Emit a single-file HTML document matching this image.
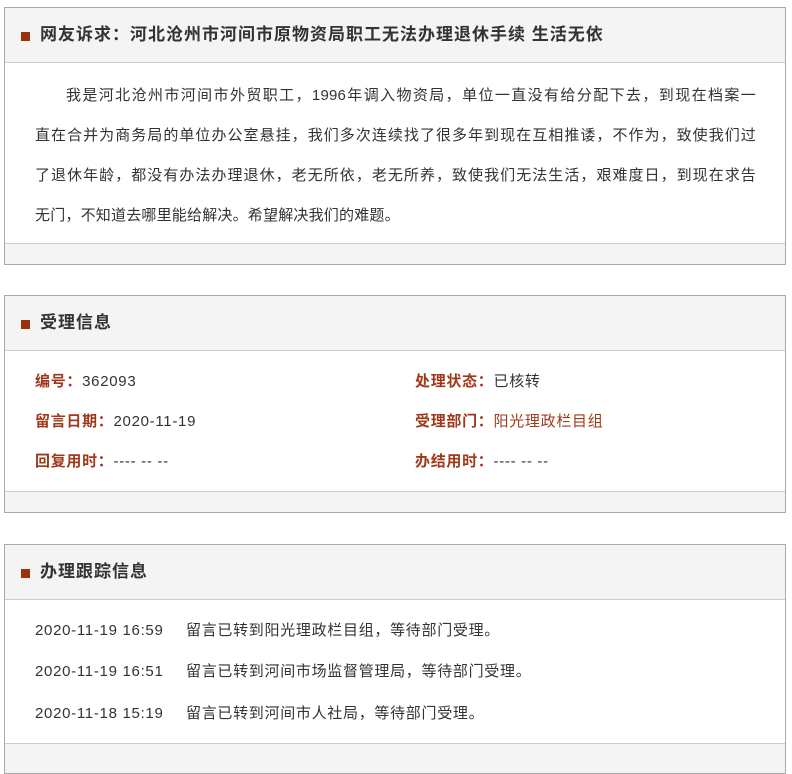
<!DOCTYPE html>
<html><head><meta charset="utf-8">
<style>
*{margin:0;padding:0;box-sizing:border-box}
body{width:792px;height:752px;background:#fff;font-family:"Liberation Sans","Noto Sans CJK SC",sans-serif;color:#333;overflow:hidden;position:relative}
.box{position:absolute;left:4px;width:782px;border:1px solid #aaa;background:#f4f4f4}
.hd{height:55px;border-bottom:1px solid #ccc;position:relative;font-size:17px;font-weight:bold;color:#333;line-height:54px;padding-left:35px;letter-spacing:1px}
.hd:before{content:"";position:absolute;left:16px;top:24px;width:9px;height:9px;background:#9b3209}
.bd{background:#fff;border-bottom:1px solid #ccc;position:relative}
.p{font-size:15px;line-height:40px;padding:13px 0 0 30px;color:#333}
.ln{width:721px;white-space:nowrap;text-align:justify;text-align-last:justify;letter-spacing:0.2px}
.row{position:absolute;font-size:15px;line-height:20px;white-space:nowrap;letter-spacing:0.7px}
.lb{color:#a0381a;font-weight:bold}
</style></head><body>
<div class="box" style="top:7px;height:258px">
 <div class="hd">网友诉求：河北沧州市河间市原物资局职工无法办理退休手续 生活无依</div>
 <div class="bd" style="height:181px"><div class="p">
  <div class="ln" style="padding-left:31px">我是河北沧州市河间市外贸职工，1996年调入物资局，单位一直没有给分配下去，到现在档案一</div>
  <div class="ln">直在合并为商务局的单位办公室悬挂，我们多次连续找了很多年到现在互相推诿，不作为，致使我们过</div>
  <div class="ln">了退休年龄，都没有办法办理退休，老无所依，老无所养，致使我们无法生活，艰难度日，到现在求告</div>
  <div style="letter-spacing:0.2px">无门，不知道去哪里能给解决。希望解决我们的难题。</div>
 </div></div>
</div>
<div class="box" style="top:295px;height:218px">
 <div class="hd">受理信息</div>
 <div class="bd" style="height:141px">
  <div class="row" style="left:30px;top:21px"><span class="lb">编号：</span>362093</div>
  <div class="row" style="left:30px;top:61px"><span class="lb">留言日期：</span>2020-11-19</div>
  <div class="row" style="left:30px;top:101px"><span class="lb">回复用时：</span>---- -- --</div>
  <div class="row" style="left:410px;top:21px"><span class="lb">处理状态：</span>已核转</div>
  <div class="row" style="left:410px;top:61px"><span class="lb">受理部门：</span><span style="color:#a0381a">阳光理政栏目组</span></div>
  <div class="row" style="left:410px;top:101px"><span class="lb">办结用时：</span>---- -- --</div>
 </div>
</div>
<div class="box" style="top:544px;height:230px">
 <div class="hd">办理跟踪信息</div>
 <div class="bd" style="height:144px">
  <div class="row" style="left:30px;top:21px">2020-11-19 16:59</div><div class="row" style="left:181px;top:21px">留言已转到阳光理政栏目组，等待部门受理。</div>
  <div class="row" style="left:30px;top:62px">2020-11-19 16:51</div><div class="row" style="left:181px;top:62px">留言已转到河间市场监督管理局，等待部门受理。</div>
  <div class="row" style="left:30px;top:104px">2020-11-18 15:19</div><div class="row" style="left:181px;top:104px">留言已转到河间市人社局，等待部门受理。</div>
 </div>
</div>
</body></html>
